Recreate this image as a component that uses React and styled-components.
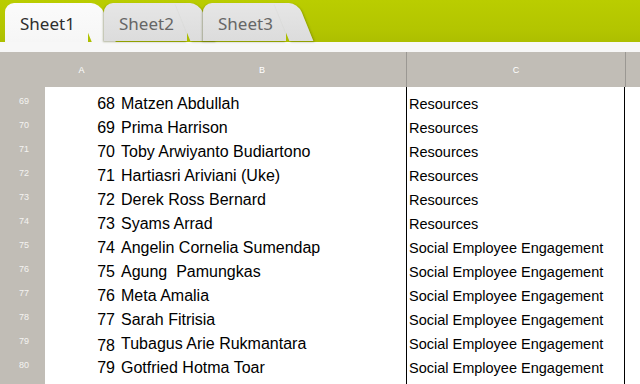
import React from "react";
import styled, { createGlobalStyle } from "styled-components";

const GlobalStyle = createGlobalStyle`
    body {
        margin: 0;
        background: #ffffff;
        overflow: hidden;
    }
`

const rows = [
    { r: 69, n: 68, name: "Matzen Abdullah", dept: "Resources" },
    { r: 70, n: 69, name: "Prima Harrison", dept: "Resources" },
    { r: 71, n: 70, name: "Toby Arwiyanto Budiartono", dept: "Resources" },
    { r: 72, n: 71, name: "Hartiasri Ariviani (Uke)", dept: "Resources" },
    { r: 73, n: 72, name: "Derek Ross Bernard", dept: "Resources" },
    { r: 74, n: 73, name: "Syams Arrad", dept: "Resources" },
    { r: 75, n: 74, name: "Angelin Cornelia Sumendap", dept: "Social Employee Engagement" },
    { r: 76, n: 75, name: "Agung\u00a0 Pamungkas", dept: "Social Employee Engagement" },
    { r: 77, n: 76, name: "Meta Amalia", dept: "Social Employee Engagement" },
    { r: 78, n: 77, name: "Sarah Fitrisia", dept: "Social Employee Engagement" },
    { r: 79, n: 78, name: "Tubagus Arie Rukmantara", dept: "Social Employee Engagement", drop: true },
    { r: 80, n: 79, name: "Gotfried Hotma Toar", dept: "Social Employee Engagement" },
    { r: "", n: "", name: "", dept: "" },
]

const App = () => {
    return (
        <Page>
            <GlobalStyle />
            <TabBar>
                <Tab $active>Sheet1</Tab>
                <Tab>Sheet2</Tab>
                <Tab>Sheet3</Tab>
            </TabBar>
            <Strip />
            <HeaderRow>
                <HeadCell />
                <HeadCell>A</HeadCell>
                <HeadCell>B</HeadCell>
                <HeadCell $line>C</HeadCell>
                <HeadCell $line />
            </HeaderRow>
            {/* thin band above the first visible row */}
            <Row $spacer>
                <RowNum />
                <Cell />
                <Cell />
                <DeptCell />
                <Cell />
            </Row>
            {rows.map((row, i) => (
                <Row key={i}>
                    <RowNum>{row.r}</RowNum>
                    <NumCell $drop={row.drop}>{row.n}</NumCell>
                    <NameCell>{row.name}</NameCell>
                    <DeptCell>{row.dept}</DeptCell>
                    <Cell />
                </Row>
            ))}
        </Page>
    )
}

export default App

const Page = styled.div`
    width: 640px;
    height: 384px;
    overflow: hidden;
    display: flex;
    flex-direction: column;
    font-family: "Liberation Sans", Arial, sans-serif;
`
const TabBar = styled.div`
    height: 42px;
    flex-shrink: 0;
    display: flex;
    align-items: flex-end;
    gap: 16px;
    padding-left: 5px;
    background: linear-gradient(#bacd00, #b3c500 70%, #adbf00);
`
const Tab = styled.div`
    position: relative;
    width: 83px;
    height: ${(p) => (p.$active ? "39px" : "38px")};
    margin-bottom: ${(p) => (p.$active ? "0" : "1px")};
    box-sizing: border-box;
    padding: 10px 0 0 15px;
    border-top-left-radius: 9px;
    background: ${(p) =>
        p.$active
            ? "linear-gradient(#fbfbfb, #f6f6f6)"
            : "linear-gradient(#e6e6e6, #dcdcdc)"};
    box-shadow: ${(p) => (p.$active ? "none" : "-1px 1px 2px rgba(60, 70, 0, 0.35)")};
    color: ${(p) => (p.$active ? "#2e2e2e" : "#666666")};
    font-family: "Noto Sans", "Open Sans", sans-serif;
    font-size: 17px;
    line-height: 22px;

    &::after {
        content: "";
        position: absolute;
        top: 0;
        bottom: 0;
        right: -12px;
        width: 24px;
        background: inherit;
        border-top-right-radius: 9px;
        transform: skewX(22deg);
        transform-origin: top left;
        box-shadow: ${(p) => (p.$active ? "none" : "1px 1px 2px rgba(60, 70, 0, 0.35)")};
    }
`
const Strip = styled.div`
    height: 10px;
    flex-shrink: 0;
    background: #f7f7f7;
`
const HeaderRow = styled.div`
    display: grid;
    grid-template-columns: 45px 73px 288px 219px 15px;
    height: 35px;
    flex-shrink: 0;
    background: #c1bdb6;
`
const HeadCell = styled.div`
    display: flex;
    align-items: center;
    justify-content: center;
    font-size: 9px;
    color: #ffffff;
    border-left: ${(p) => (p.$line ? "1px solid #9b9893" : "none")};
`
const Row = styled.div`
    display: grid;
    grid-template-columns: 45px 73px 288px 219px 15px;
    height: ${(p) => (p.$spacer ? "4px" : "24px")};
    flex-shrink: 0;
    background: #ffffff;
`
const RowNum = styled.div`
    background: #c1bdb6;
    color: #f4f3f1;
    font-size: 9px;
    padding: 5px 0 0 3px;
    text-align: center;
    line-height: 11px;
`
const Cell = styled.div`
    font-size: 16px;
    line-height: 18px;
    padding-top: 4px;
    color: #000000;
    white-space: pre;
    overflow: hidden;
`
const NumCell = styled(Cell)`
    text-align: right;
    padding-right: 3px;
    padding-top: ${(p) => (p.$drop ? "6px" : "4px")};
`
const NameCell = styled(Cell)`
    padding-left: 3px;
`
const DeptCell = styled(Cell)`
    border-left: 1px solid #000000;
    border-right: 1px solid #000000;
    padding-left: 2px;
    font-size: 14.5px;
`
